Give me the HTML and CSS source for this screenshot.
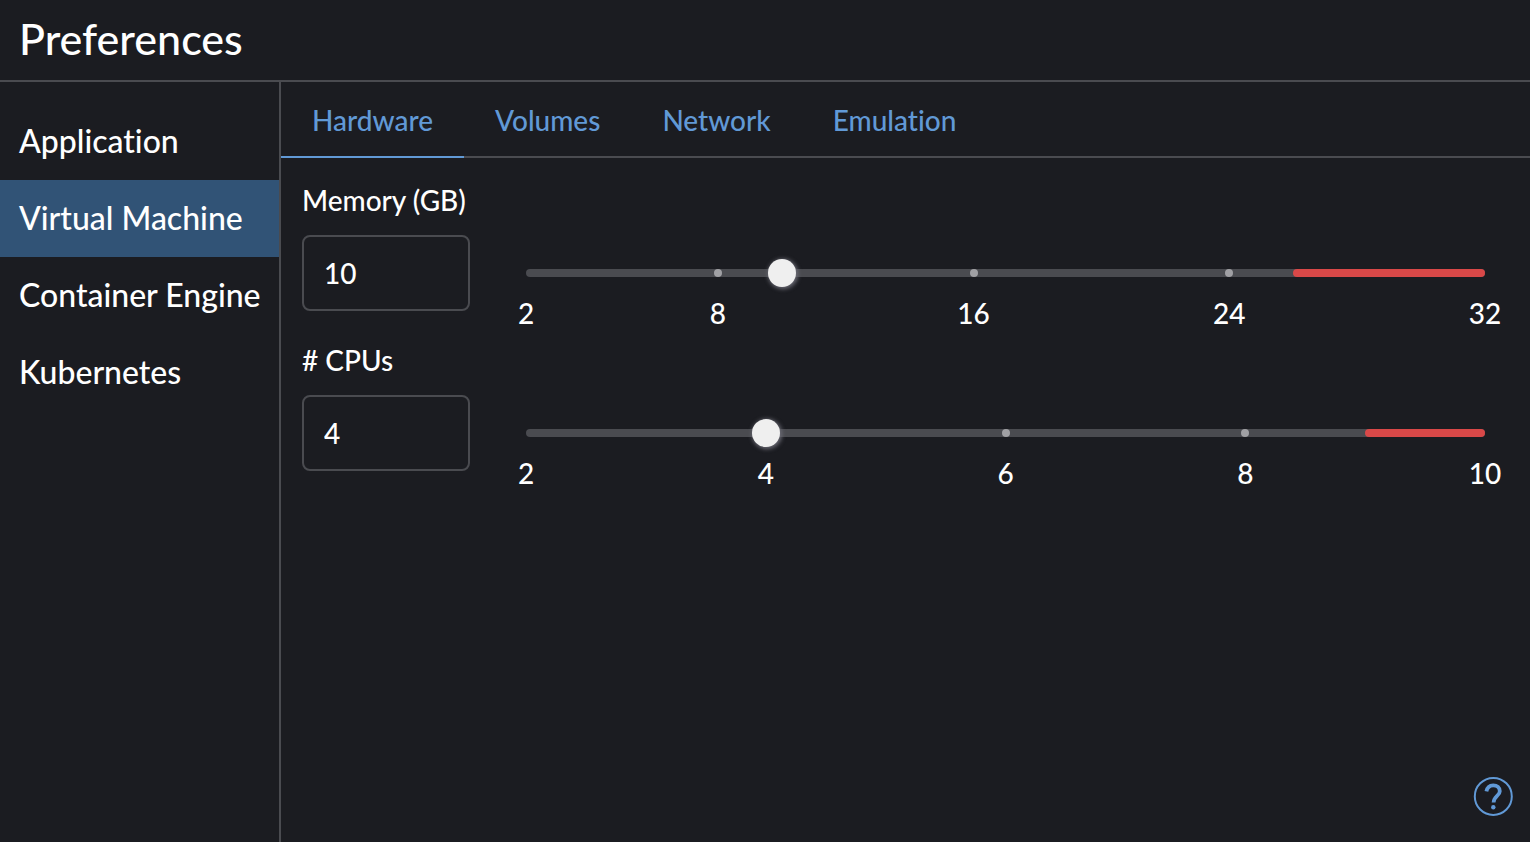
FILE: index.html
```html
<!DOCTYPE html>
<html lang="en">
<head>
<meta charset="utf-8">
<title>Preferences</title>
<link rel="stylesheet" href="styles.css">
</head>
<body>
<div class="window">
  <header class="header"><h1 class="title">Preferences</h1></header>
  <div class="main">
    <nav class="sidebar" aria-label="Preferences">
      <a class="nav-item" href="#application">Application</a>
      <a class="nav-item active" href="#vm" aria-current="page">Virtual Machine</a>
      <a class="nav-item" href="#engine">Container Engine</a>
      <a class="nav-item" href="#kubernetes">Kubernetes</a>
    </nav>
    <main class="content">
      <nav class="tabs" aria-label="Virtual Machine">
        <a class="tab active" href="#hardware" aria-current="page">Hardware</a>
        <a class="tab" href="#volumes">Volumes</a>
        <a class="tab" href="#network">Network</a>
        <a class="tab" href="#emulation">Emulation</a>
      </nav>
      <form class="panel">
        <section class="setting">
          <label class="label" for="memory">Memory (GB)</label>
          <div class="controls">
            <input class="number" id="memory" type="number" min="2" max="32" value="10">
            <div class="slider">
              <div class="rail">
                <span class="danger" style="left: 80%"></span>
                <span class="dot" style="left: 20%"></span>
                <span class="dot" style="left: 46.667%"></span>
                <span class="dot" style="left: 73.333%"></span>
              </div>
              <input class="range" type="range" min="2" max="32" value="10" aria-label="Memory (GB)">
              <div class="marks">
                <span class="mark" style="left: 0%">2</span>
                <span class="mark" style="left: 20%">8</span>
                <span class="mark" style="left: 46.667%">16</span>
                <span class="mark" style="left: 73.333%">24</span>
                <span class="mark" style="left: 100%">32</span>
              </div>
            </div>
          </div>
        </section>
        <section class="setting">
          <label class="label" for="cpus"># CPUs</label>
          <div class="controls">
            <input class="number" id="cpus" type="number" min="2" max="10" value="4">
            <div class="slider">
              <div class="rail">
                <span class="danger" style="left: 87.5%"></span>
                <span class="dot" style="left: 50%"></span>
                <span class="dot" style="left: 75%"></span>
              </div>
              <input class="range" type="range" min="2" max="10" value="4" aria-label="# CPUs">
              <div class="marks">
                <span class="mark" style="left: 0%">2</span>
                <span class="mark" style="left: 25%">4</span>
                <span class="mark" style="left: 50%">6</span>
                <span class="mark" style="left: 75%">8</span>
                <span class="mark" style="left: 100%">10</span>
              </div>
            </div>
          </div>
        </section>
      </form>
      <footer class="footer">
        <button class="help" type="button" aria-label="Help">
          <svg width="40" height="40" viewBox="0 0 40 40" fill="none" stroke="currentColor" aria-hidden="true">
            <circle cx="20.3" cy="20.4" r="18.5" stroke-width="2"/>
            <path d="M13.4 15.4C14.2 11.4 16.7 9.3 20.2 9.3C24.2 9.3 26.8 11.8 26.8 15.2C26.8 20 20.6 20 20.6 26.6" stroke-width="3.8"/>
            <circle cx="20.3" cy="31.2" r="2.2" fill="currentColor" stroke="none"/>
          </svg>
        </button>
      </footer>
    </main>
  </div>
</div>
</body>
</html>
```
FILE: styles.css
```css
* {
  box-sizing: border-box;
}

body {
  margin: 0;
  background: #1b1c21;
  color: #ffffff;
  font-family: Lato, "Liberation Sans", sans-serif;
  font-size: 28px;
  font-variant-ligatures: none;
  font-weight: 500;
  line-height: 34px;
}

.window {
  display: flex;
  flex-direction: column;
  min-height: 100vh;
}

.header {
  padding: 13px 19px 15px;
  border-bottom: 2px solid #4a4b50;
}

.title {
  margin: 0;
  font-size: 43px;
  font-weight: 500;
  line-height: 52px;
}

.main {
  display: flex;
  flex: 1;
}

.sidebar {
  flex: none;
  width: 281px;
  padding-top: 21px;
  border-right: 2px solid #4a4b50;
}

.nav-item {
  display: block;
  padding: 18px 19px 20px;
  color: #ffffff;
  font-size: 32px;
  line-height: 39px;
  text-decoration: none;
  white-space: nowrap;
}

.nav-item.active {
  background: #315376;
}

.content {
  display: flex;
  flex: 1;
  flex-direction: column;
  min-width: 0;
}

.tabs {
  display: flex;
  border-bottom: 2px solid #4a4b50;
}

.tab {
  margin-bottom: -2px;
  padding: 21px 31px 19px;
  border-bottom: 2px solid transparent;
  color: #6199d6;
  line-height: 34px;
  text-decoration: none;
}

.tab.active {
  border-color: #6199d6;
}

.panel {
  display: flex;
  flex: 1;
  flex-direction: column;
  gap: 32px;
  padding: 25px 45px 0 21px;
}

.label {
  display: block;
  margin-bottom: 18px;
}

.controls {
  display: flex;
  gap: 56px;
}

.number {
  flex: none;
  width: 168px;
  height: 76px;
  padding: 0 20px;
  border: 2px solid #4a4b50;
  border-radius: 8px;
  background: transparent;
  color: #ffffff;
  font: inherit;
  appearance: textfield;
}

.number::-webkit-inner-spin-button {
  appearance: none;
}

.slider {
  position: relative;
  flex: 1;
  height: 76px;
  padding-top: 34px;
}

.rail {
  position: relative;
  height: 8px;
  border-radius: 4px;
  background: #4a4b50;
}

.danger {
  position: absolute;
  top: 0;
  right: 0;
  height: 8px;
  border-radius: 4px;
  background: #d94848;
}

.dot {
  position: absolute;
  top: 0;
  width: 8px;
  height: 8px;
  border-radius: 50%;
  background: #a0a0a4;
  transform: translateX(-50%);
}

.range {
  position: absolute;
  top: 24px;
  left: -14px;
  width: calc(100% + 28px);
  height: 28px;
  margin: 0;
  background: transparent;
  appearance: none;
}

.range::-webkit-slider-thumb {
  width: 28px;
  height: 28px;
  border-radius: 50%;
  background: #efefef;
  box-shadow: 1px 1px 4px 1px #6c6c76;
  appearance: none;
}

.marks {
  position: relative;
  margin-top: 19px;
}

.mark {
  position: absolute;
  transform: translateX(-50%);
}

.footer {
  display: flex;
  justify-content: flex-end;
  padding: 0 17px 26px;
}

.help {
  display: flex;
  padding: 0;
  border: 0;
  background: none;
  color: #6199d6;
}
```
